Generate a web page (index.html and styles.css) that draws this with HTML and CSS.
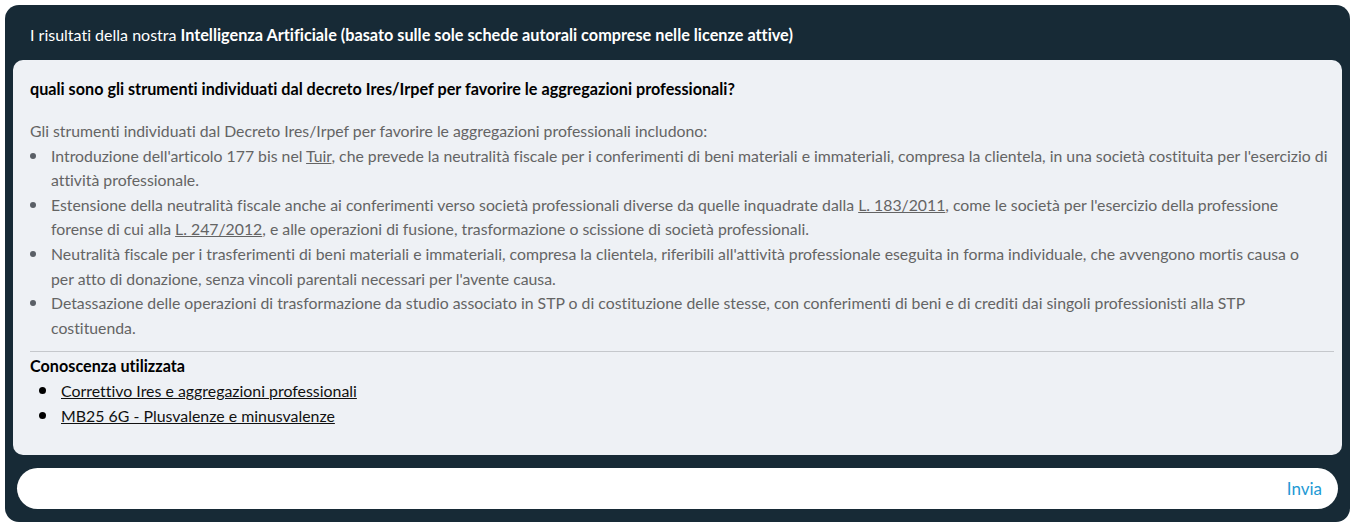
FILE: index.html
```html
<!DOCTYPE html>
<html lang="it">
<head>
<meta charset="utf-8">
<title>Intelligenza Artificiale</title>
<link rel="stylesheet" href="styles.css">
</head>
<body>
<div class="panel">
  <div class="panel-head">I risultati della nostra <strong>Intelligenza Artificiale (basato sulle sole schede autorali comprese nelle licenze attive)</strong></div>
  <div class="answer-card">
    <div class="question">quali sono gli strumenti individuati dal decreto Ires/Irpef per favorire le aggregazioni professionali?</div>
    <div class="answer">
      <p class="intro">Gli strumenti individuati dal Decreto Ires/Irpef per favorire le aggregazioni professionali includono:</p>
      <ul class="points">
        <li><span>Introduzione dell'articolo 177 bis nel <a href="#">Tuir</a>, che prevede la neutralità fiscale per i conferimenti di beni materiali e immateriali, compresa la clientela, in una società costituita per l'esercizio di attività professionale.</span></li>
        <li><span>Estensione della neutralità fiscale anche ai conferimenti verso società professionali diverse da quelle inquadrate dalla <a href="#">L. 183/2011</a>, come le società per l'esercizio della professione forense di cui alla <a href="#">L. 247/2012</a>, e alle operazioni di fusione, trasformazione o scissione di società professionali.</span></li>
        <li><span>Neutralità fiscale per i trasferimenti di beni materiali e immateriali, compresa la clientela, riferibili all'attività professionale eseguita in forma individuale, che avvengono mortis causa o<br>per atto di donazione, senza vincoli parentali necessari per l'avente causa.</span></li>
        <li><span>Detassazione delle operazioni di trasformazione da studio associato in STP o di costituzione delle stesse, con conferimenti di beni e di crediti dai singoli professionisti alla STP<br>costituenda.</span></li>
      </ul>
    </div>
    <div class="sources">
      <div class="sources-title">Conoscenza utilizzata</div>
      <ul class="source-list">
        <li><a href="#">Correttivo Ires e aggregazioni professionali</a></li>
        <li><a href="#">MB25 6G - Plusvalenze e minusvalenze</a></li>
      </ul>
    </div>
  </div>
  <div class="composer">
    <div class="input-pill">
      <input class="input-field" type="text" aria-label="Domanda">
      <button class="send" type="button">Invia</button>
    </div>
  </div>
</div>
</body>
</html>
```
FILE: styles.css
```css
html, body {
  background: #ffffff;
}
body {
  margin: 5px 2px 5px 5px;
  font-family: Lato, "Open Sans", sans-serif;
  font-variant-ligatures: none;
  font-size: 16px;
}
.panel {
  background: #172a36;
  border-radius: 14px;
  padding: 0 8px;
  height: 517px;
  box-sizing: border-box;
  display: flex;
  flex-direction: column;
}
.panel-head {
  height: 55px;
  display: flex;
  align-items: center;
  padding-left: 17px;
  padding-top: 3px;
  box-sizing: border-box;
  color: #ffffff;
  font-size: 16px;
  white-space: nowrap;
}
.panel-head strong {
  font-weight: 700;
  font-size: 16.25px;
  margin-left: 4px;
}
.answer-card {
  background: #eef1f5;
  border-radius: 10px;
  padding: 17px 8px 0 17px;
  height: 395px;
  box-sizing: border-box;
  line-height: 24.6px;
}
.question {
  font-weight: 700;
  color: #000000;
  font-size: 16.2px;
}
.answer {
  margin-top: 17.4px;
  color: #646464;
  font-size: 15.8px;
}
.intro {
  margin: 0;
}
.points {
  list-style: none;
  margin: 0;
  padding: 0;
}
.points li {
  display: flex;
  align-items: flex-start;
}
.points li::before {
  content: "";
  flex: 0 0 6px;
  width: 6px;
  height: 6px;
  border-radius: 50%;
  background: #5a5f66;
  margin: 9px 15px 0 0;
}
.points a {
  color: #646464;
  text-decoration: underline;
}
.sources {
  margin-top: 11px;
  border-top: 1px solid #c5c8cc;
  padding-top: 2px;
}
.sources-title {
  font-weight: 700;
  color: #000000;
  font-size: 16.2px;
}
.source-list {
  list-style: none;
  margin: 0;
  padding: 0 0 0 9px;
}
.source-list li {
  display: flex;
  align-items: flex-start;
}
.source-list li::before {
  content: "";
  flex: 0 0 7px;
  width: 7px;
  height: 7px;
  border-radius: 50%;
  background: #000000;
  margin: 8px 15px 0 0;
}
.source-list a {
  color: #111111;
  text-decoration: underline;
  font-size: 15.9px;
}
.composer {
  padding: 13px 4px 0;
}
.input-pill {
  height: 41px;
  background: #ffffff;
  border-radius: 21px;
  display: flex;
  align-items: center;
  padding: 0 16px 0 20px;
}
.input-field {
  flex: 1;
  border: none;
  outline: none;
  background: transparent;
  font: inherit;
  height: 100%;
}
.send {
  border: none;
  background: transparent;
  color: #2399d4;
  font-family: inherit;
  font-size: 17px;
  padding: 0;
  cursor: pointer;
}
```
